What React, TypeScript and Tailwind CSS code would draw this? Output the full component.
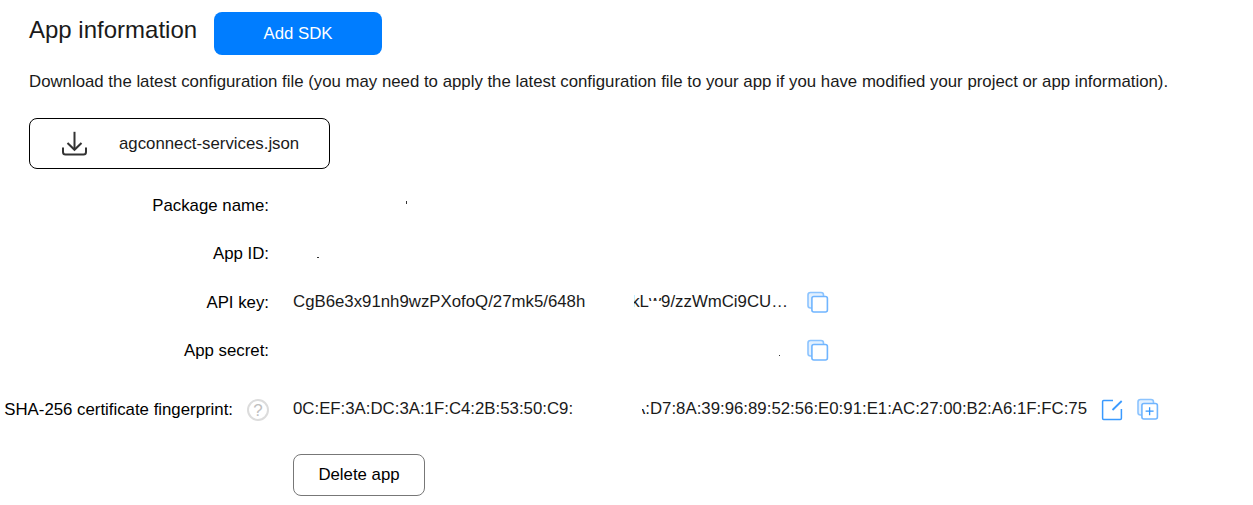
import type { ReactNode } from 'react';

function CopyIcon({ plus = false }: { plus?: boolean }) {
  return (
    <svg className="h-6 w-6 shrink-0" viewBox="0 0 24 24" fill="none">
      <rect x="2" y="1.5" width="15.5" height="15.5" rx="2.5" fill="#e3f1ff" stroke="#8cc4ff" strokeWidth="1.6" />
      <rect x="5.9" y="5.5" width="15.5" height="15.5" rx="2" fill="#fff" stroke="#70b5ff" strokeWidth="1.6" />
      {plus && <path d="M13.6 9.2v8M9.6 13.2h8" stroke="#3497ff" strokeWidth="1.3" />}
    </svg>
  );
}

function EditIcon() {
  return (
    <svg className="h-6 w-6 shrink-0" viewBox="0 0 24 24" fill="none" stroke="#3a9aff" strokeWidth="1.5">
      <path d="M13 2.6H3.6Q2.6 2.6 2.6 3.6V20.3Q2.6 21.4 3.6 21.4H20.3Q21.4 21.4 21.4 20.3V11" />
      <path d="M12.5 12 21.7 3" strokeWidth="1.8" />
    </svg>
  );
}

function DownloadIcon() {
  return (
    <svg className="h-7 w-7 shrink-0" viewBox="0 0 28 28" fill="none" stroke="#333" strokeWidth="2">
      <path d="M14.5 1.8V19.5" />
      <path d="M7.5 13 14.5 19.8 21.5 13" />
      <path d="M3 17.5v4.5q0 2.5 2.5 2.5h18q2.5 0 2.5-2.5V17.5" />
    </svg>
  );
}

function HelpIcon() {
  return (
    <span className="ml-[14px] flex h-[22px] w-[22px] shrink-0 items-center justify-center rounded-full border-2 border-[#dcdcdc] text-[17px] leading-none text-[#c0c0c0]">
      ?
    </span>
  );
}

function Row({ label, help, className, children }: { label: string; help?: boolean; className: string; children?: ReactNode }) {
  return (
    <div className={`flex items-center ${className}`}>
      <div className="flex w-[269px] shrink-0 items-center justify-end whitespace-nowrap text-black">
        {label}
        {help && <HelpIcon />}
      </div>
      <div className="ml-6 flex items-center whitespace-nowrap">{children}</div>
    </div>
  );
}

export default function App() {
  return (
    <main className="h-[505px] w-[1253px] overflow-hidden bg-white font-['Liberation_Sans',Arial,sans-serif] text-[16.81px] leading-6 text-[#1a1a1a]">
      <header className="flex pt-3 pl-[29px]">
        <h1 className="w-[185px] pt-0.5 text-2xl whitespace-nowrap">App information</h1>
        <button className="h-[43px] w-[168px] rounded-lg bg-[#007dff] text-white">Add SDK</button>
      </header>

      <p className="mt-[15px] pl-[29px] whitespace-nowrap">
        Download the latest configuration file (you may need to apply the latest configuration file to your app if you have modified your project or app information).
      </p>

      <button className="mt-6 ml-[29px] flex h-[51px] w-[301px] items-center rounded-lg border border-black pl-[30px]">
        <DownloadIcon />
        <span className="ml-[31px]">agconnect-services.json</span>
      </button>

      <Row label="Package name:" className="mt-[25px] h-6">
        <span className="mb-2 ml-[113px] h-[3px] w-px bg-[#333]" />
      </Row>
      <Row label="App ID:" className="mt-6 h-6">
        <span className="mt-1.5 ml-6 h-px w-0.5 bg-[#333]" />
      </Row>
      <Row label="API key:" className="mt-[25px] h-6">
        <span className="-mt-0.5 w-[291px]">CgB6e3x91nh9wzPXofoQ/27mk5/648h</span>
        <span className="relative -mt-0.5 ml-[50px] flex w-[154px] justify-end">
          kL
          <span className="relative">
            w
            <span className="absolute inset-x-0 top-[11px] h-3 bg-white" />
          </span>
          9/zzWmCi9CU…
          {/* hides the end of the redacted section */}
          <span className="absolute right-full h-6 w-2 bg-white" />
        </span>
        <span className="ml-[18px] flex"><CopyIcon /></span>
      </Row>
      <Row label="App secret:" className="mt-6 h-6">
        <span className="mt-2 ml-[486px] h-px w-px bg-[#333]" />
        <span className="ml-[26px] flex"><CopyIcon /></span>
      </Row>
      <Row label="SHA-256 certificate fingerprint:" help className="mt-[35px] h-6">
        <span className="-mt-0.5 w-[280px]">0C:EF:3A:DC:3A:1F:C4:2B:53:50:C9:</span>
        <span className="relative -mt-0.5 ml-[69px] flex w-[445px] justify-end">
          A:D7:8A:39:96:89:52:56:E0:91:E1:AC:27:00:B2:A6:1F:FC:75
          <span className="absolute right-full h-6 w-3 bg-white" />
          <span className="absolute top-0 left-0 h-3 w-1 bg-white" />
        </span>
        <span className="ml-[13px] flex gap-3"><EditIcon /><CopyIcon plus /></span>
      </Row>

      <button className="mt-8 ml-[293px] h-[42px] w-[132px] rounded-lg border border-[#777] text-black">Delete app</button>
    </main>
  );
}
